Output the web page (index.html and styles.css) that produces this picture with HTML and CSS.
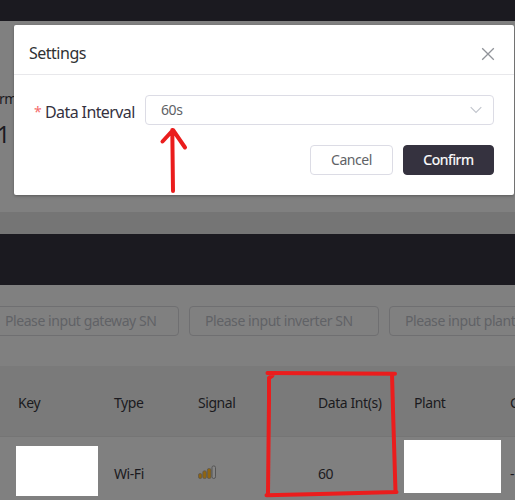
FILE: index.html
```
<!DOCTYPE html>
<html lang="en">
<head>
<meta charset="utf-8">
<title>Settings</title>
<link rel="stylesheet" href="styles.css">
</head>
<body>
<main class="page">
  <div class="topbar"></div>
  <section class="summary">
    <div class="summary-label">rm</div>
    <div class="summary-value">1</div>
  </section>
  <div class="divider"></div>
  <div class="navbar"></div>
  <section class="filters">
    <div class="filter"><span class="gateway">Please input gateway SN</span></div>
    <div class="filter"><span class="inverter">Please input inverter SN</span></div>
    <div class="filter"><span class="plant">Please input plant</span></div>
  </section>
  <section class="table">
    <div class="row head">
      <span>Key</span><span>Type</span><span>Signal</span><span>Data Int(s)</span><span>Plant</span><span>C</span>
    </div>
    <div class="row">
      <span class="mask mask-key"></span>
      <span class="cell">Wi-Fi</span>
      <span><svg class="signal" width="20" height="16" viewBox="0 0 20 16">
        <g fill="#916510" stroke="#5c5850" stroke-width=".8">
          <rect x=".5" y="9.5" width="3.4" height="5" rx="1.6"/>
          <rect x="4.8" y="6.8" width="3.6" height="7.7" rx="1.6"/>
          <rect x="9.3" y="4.5" width="3.7" height="10" rx="1.6"/>
        </g>
        <rect x="14" y="1.9" width="3.5" height="12.6" rx="1.7" fill="#858585" stroke="#555"/>
      </svg></span>
      <span class="cell">60</span>
      <span class="mask mask-plant"></span>
      <span class="cell">-</span>
    </div>
  </section>
</main>

<div class="dialog" role="dialog">
  <header class="dialog-head">
    <h1>Settings</h1>
    <svg width="14" height="14" viewBox="0 0 14 14"><path d="M1.2 1.2 12.8 12.8M12.8 1.2 1.2 12.8" stroke="#909399" stroke-width="1.3" fill="none"/></svg>
  </header>
  <div class="field">
    <label><span class="required">*</span><span class="label-text">Data Interval</span></label>
    <div class="select"><span>60s</span>
      <svg width="12" height="8" viewBox="0 0 12 8"><path d="M.7 1.2 6 6.4 11.3 1.2" stroke="#c0c4cc" stroke-width="1.1" fill="none"/></svg>
    </div>
  </div>
  <footer class="actions">
    <button class="cancel"><span>Cancel</span></button>
    <button class="confirm"><span>Confirm</span></button>
  </footer>
</div>

<svg class="markup" width="515" height="500" viewBox="0 0 515 500">
  <g fill="none" stroke="#ea1d1d" stroke-width="4" stroke-linecap="round" stroke-linejoin="round">
    <path d="M173 191 172.3 130M162.5 141.5 173 130 185 147.5"/>
    <path d="M267.5 373 395 373.8M272.5 375.5 269 378 269 400 268 494M392 374 393 410 395.5 492M266.500 495.300 330 493.800 396.500 492"/>
  </g>
</svg>
</body>
</html>
```
FILE: styles.css
```
* { box-sizing: border-box; }

body {
  margin: 0;
  width: 515px;
  height: 500px;
  overflow: hidden;
  position: relative;
  background: #808080;
  font: 14px/20px "Noto Sans", "Open Sans", sans-serif;
  letter-spacing: -.43px;
}

.page { height: 500px; overflow: hidden; color: #1b1a20; }
.topbar { height: 21px; background: #1b1a20; }
.summary { height: 191px; padding-top: 68px; background: #808080; }
.summary-label { width: 40px; margin-left: -1px; font-size: 14px; }
.summary-value { margin: 10px 0 0 -3px; font-size: 23px; line-height: 30px; }
.divider { height: 22px; background: #757575; }
.navbar { height: 51px; background: #1b1a20; }

.filters {
  display: flex;
  gap: 10px;
  height: 81px;
  padding-top: 21px;
  margin-left: -11px;
}
.filter {
  flex: none;
  width: 190px;
  height: 30px;
  padding: 4px 15px;
  border: 1px solid #6f6f71;
  border-radius: 4px;
  color: #606266;
  white-space: nowrap;
}

.row {
  display: grid;
  grid-template-columns: 96px 84px 120px 96px 96px 96px;
  align-items: center;
  height: 71px;
  padding-left: 18px;
  white-space: nowrap;
}
.head { background: #7a7a7a; border-bottom: 1px solid #757575; padding-top: 3px; }
.cell { padding-top: 2px; }
.signal { display: block; margin-top: -1px; }
.mask { background: #fff; }
.mask-key { width: 82px; height: 50px; margin: -3px 0 0 -2px; }
.mask-plant { width: 97px; height: 53px; margin: -12px 0 0 -10px; }

.dialog {
  position: absolute;
  left: 14px;
  top: 25px;
  width: 500px;
  height: 170px;
  background: #fff;
  border-radius: 2px;
  box-shadow: 0 1px 3px rgba(0, 0, 0, .3);
}
.dialog-head {
  display: flex;
  align-items: center;
  justify-content: space-between;
  height: 50px;
  padding: 5px 19px 0 15px;
  border-bottom: 1px solid #e8e8eb;
}
.dialog-head svg { margin-top: 4px; }
h1 { margin: 0; padding-top: 1px; font-size: 16px; font-weight: 400; color: #303133; letter-spacing: -.5px; }
.field { display: flex; align-items: center; padding: 20px 20px 0; }
label { display: flex; width: 111px; font-size: 16px; letter-spacing: -.6px; color: #35323f; white-space: nowrap; padding-top: 3px; }
.required { width: 11px; color: #f56c6c; font-size: 14px; }
.select {
  display: flex;
  align-items: center;
  justify-content: space-between;
  flex: 1;
  height: 30px;
  padding: 0 11px 0 15px;
  border: 1px solid #dcdce5;
  border-radius: 4px;
  color: #606266;
}
.actions { display: flex; justify-content: flex-end; gap: 10px; padding: 20px 20px 0; }
button {
  height: 30px;
  padding: 0;
  border: 1px solid #dcdce5;
  border-radius: 4px;
  background: #fff;
  color: #606266;
  font: inherit;
  letter-spacing: inherit;
}
.cancel { width: 83px; }
.confirm { width: 91px; background: #35323f; border-color: #35323f; color: #fff; -webkit-text-stroke: .2px #fff; }

.markup { position: absolute; left: 0; top: 0; pointer-events: none; }
```
